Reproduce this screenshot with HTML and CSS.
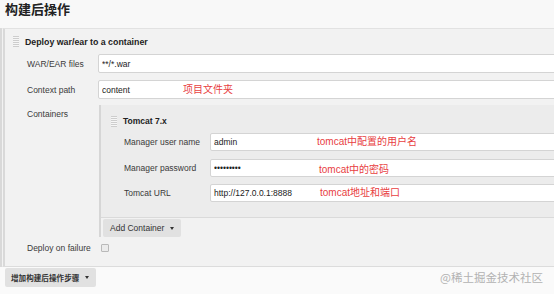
FILE: index.html
```html
<!DOCTYPE html>
<html lang="zh-CN">
<head>
  <meta charset="UTF-8" />
  <meta name="viewport" content="width=device-width, initial-scale=1.0"/>
  <title>构建后操作</title>
  <link rel="stylesheet" href="styles.css">
</head>
<body>
  <div class="page">
    <h1 class="page-title">构建后操作</h1>

    <div class="publisher">
      <div class="step-head">
        <span class="grip"></span>
        <span class="step-title">Deploy war/ear to a container</span>
      </div>

      <div class="field">
        <label for="war">WAR/EAR files</label>
        <div class="control">
          <input class="text-input" id="war" type="text" value="**/*.war">
        </div>
      </div>

      <div class="field">
        <label for="ctx">Context path</label>
        <div class="control">
          <input class="text-input" id="ctx" type="text" value="content">
          <span class="note note-path">项目文件夹</span>
        </div>
      </div>

      <div class="field field-top">
        <label>Containers</label>
        <div class="containers">
          <div class="chunk">
            <div class="chunk-head">
              <span class="grip"></span>
              <span class="chunk-title">Tomcat 7.x</span>
            </div>

            <div class="sub-field">
              <label for="user">Manager user name</label>
              <div class="control">
                <input class="text-input small" id="user" type="text" value="admin">
                <span class="note note-sub">tomcat中配置的用户名</span>
              </div>
            </div>

            <div class="sub-field">
              <label for="pass">Manager password</label>
              <div class="control">
                <input class="text-input small" id="pass" type="password" value="123456789">
                <span class="note note-sub note-low">tomcat中的密码</span>
              </div>
            </div>

            <div class="sub-field">
              <label for="url">Tomcat URL</label>
              <div class="control">
                <input class="text-input small" id="url" type="text" value="http://127.0.0.1:8888">
                <span class="note note-sub note-url">tomcat地址和端口</span>
              </div>
            </div>
          </div>

          <button class="btn btn-container">Add Container <span class="caret"></span></button>
        </div>
      </div>

      <div class="field">
        <label for="fail">Deploy on failure</label>
        <div class="control">
          <input class="check" id="fail" type="checkbox">
        </div>
      </div>
    </div>

    <div class="bottom-bar">
      <button class="btn btn-add">增加构建后操作步骤 <span class="caret"></span></button>
    </div>

    <div class="watermark">@稀土掘金技术社区</div>
  </div>
</body>
</html>
```

FILE: styles.css
```css
:root {
  --bg-top: #f8f8f8;
  --bg-section: #f2f2f2;
  --bg-chunk: #ececec;
  --line: #dcdcdc;
  --text: #3a3a3a;
  --note: #e8403f;
}

* {
  box-sizing: border-box;
}

html, body {
  margin: 0;
  padding: 0;
  overflow: hidden;
  background: #fafafa;
}

body {
  font-family: "Liberation Sans", Arial, "Noto Sans CJK SC", sans-serif;
  font-size: 8.5px;
  color: var(--text);
}

.page {
  position: relative;
  width: 640px;
  height: 294px;
}

.page-title {
  margin: 0;
  height: 28px;
  padding-left: 5px;
  line-height: 18px;
  font-family: "Noto Sans CJK SC", sans-serif;
  font-size: 13px;
  font-weight: 700;
  color: #222;
  background: var(--bg-top);
}

.publisher {
  background: var(--bg-section);
  border-top: 1px solid #e2e2e2;
  border-bottom: 1px solid var(--line);
  border-left: 5px double #d9d9d9;
  padding-bottom: 13px;
}

.step-head {
  display: flex;
  align-items: center;
  height: 25px;
  padding-left: 8px;
}

.grip {
  display: inline-block;
  width: 6px;
  height: 11px;
  margin-right: 6px;
  background: repeating-linear-gradient(to bottom, #cdcdcd 0 1px, #f6f6f6 1px 2px);
}

.step-title,
.chunk-title {
  font-weight: 700;
  color: #222;
}

.step-title {
  font-size: 8.8px;
}

.field {
  display: grid;
  grid-template-columns: 71px 1fr;
  align-items: center;
  padding-left: 22px;
  margin-top: 6px;
}

.step-head + .field {
  margin-top: 0;
}

.step-head + .field + .field {
  margin-top: 7px;
}

.field-top {
  align-items: start;
}

.field-top > label {
  padding-top: 4px;
}

label {
  line-height: 10px;
  white-space: nowrap;
}

.control {
  position: relative;
}

.text-input {
  display: block;
  width: 100%;
  height: 19px;
  margin: 0;
  padding: 0 3px;
  border: 1px solid #d4d4d4;
  border-radius: 2px;
  background: #fff;
  font-family: "Liberation Sans", Arial, sans-serif;
  font-size: 8.5px;
  color: #222;
  outline: none;
}

.text-input.small {
  height: 18px;
}

.note {
  position: absolute;
  top: 50%;
  transform: translateY(-50%);
  font-family: "Liberation Sans", Arial, "Noto Sans CJK SC", sans-serif;
  font-size: 10px;
  line-height: 12px;
  color: var(--note);
  white-space: nowrap;
}

.note-path {
  left: 85px;
}

.note-sub {
  left: 107px;
}

.note-low {
  left: 109px;
  margin-top: 2px;
}

.note-url {
  left: 110px;
}

.containers {
  margin-left: 1px;
  border-left: 2px solid #d6d6d6;
}

.chunk {
  background: var(--bg-chunk);
  border-bottom: 1px solid #dadada;
  padding: 0 0 15px 10px;
}

.chunk-head {
  display: flex;
  align-items: center;
  height: 28px;
  padding-top: 4px;
}

.sub-field {
  display: grid;
  grid-template-columns: 86px 1fr;
  align-items: center;
  padding-left: 13px;
  margin-top: 7px;
}

.chunk-head + .sub-field {
  margin-top: 0;
}

.chunk-head + .sub-field + .sub-field {
  margin-top: 8px;
}

.btn {
  display: inline-flex;
  align-items: center;
  height: 18px;
  padding: 0 7px;
  border: none;
  border-radius: 2px;
  background: #e1e1e1;
  font-family: "Liberation Sans", Arial, "Noto Sans CJK SC", sans-serif;
  font-size: 8.5px;
  color: #333;
  cursor: pointer;
}

.btn-container {
  margin: 1px 0 0 2px;
}

.caret {
  display: inline-block;
  margin-left: 6px;
  border-left: 2.5px solid transparent;
  border-right: 2.5px solid transparent;
  border-top: 3px solid #333;
}

.check {
  appearance: none;
  display: block;
  width: 8px;
  height: 8px;
  margin: 0 0 0 3px;
  border: 1px solid #b9b9b9;
  border-radius: 1px;
  background: #ebebeb;
}

.bottom-bar {
  padding: 1px 0 0 5px;
}

.btn-add {
  height: 19px;
  padding: 0 7px 0 6px;
  font-family: "Noto Sans CJK SC", sans-serif;
  font-size: 7.6px;
  font-weight: 700;
  color: #333;
}

.watermark {
  position: absolute;
  top: 269px;
  left: 440px;
  font-family: "Noto Sans CJK SC", sans-serif;
  font-size: 11.5px;
  color: #b2b2b2;
  white-space: nowrap;
}
```
